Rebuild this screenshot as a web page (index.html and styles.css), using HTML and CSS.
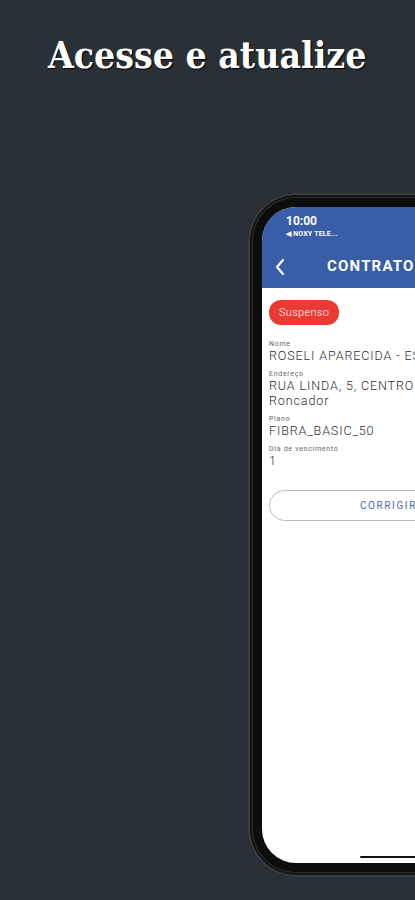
FILE: index.html
```html
<!DOCTYPE html>
<html lang="pt-BR">
<head>
  <meta charset="UTF-8" />
  <meta name="viewport" content="width=device-width, initial-scale=1.0" />
  <title>Acesse e atualize</title>
  <link rel="stylesheet" href="styles.css">
</head>
<body>
  <div class="page">
    <h1 class="headline">Acesse e atualize</h1>
    <div class="phone">
      <div class="screen">
        <div class="status">
          <div class="clock">10:00</div>
          <div class="carrier">&#9664; NOXY TELE...</div>
        </div>
        <div class="appbar">
          <svg class="back" width="12" height="18" viewBox="0 0 12 18">
            <path d="M9 2 L3 9 L9 16" fill="none" stroke="#fff" stroke-width="2.2" stroke-linecap="round" stroke-linejoin="round"/>
          </svg>
          <span class="appbar-title">CONTRATO</span>
        </div>
        <div class="content">
          <span class="badge">Suspenso</span>
          <div class="field">
            <div class="label">Nome</div>
            <div class="value">ROSELI APARECIDA - ESTEVES</div>
          </div>
          <div class="field">
            <div class="label">Endereço</div>
            <div class="value">RUA LINDA, 5, CENTRO -<br>Roncador</div>
          </div>
          <div class="field">
            <div class="label">Plano</div>
            <div class="value">FIBRA_BASIC_50</div>
          </div>
          <div class="field">
            <div class="label">Dia de vencimento</div>
            <div class="value">1</div>
          </div>
          <button class="fix">CORRIGIR DADOS</button>
        </div>
        <div class="home-bar"></div>
      </div>
    </div>
  </div>
</body>
</html>
```

FILE: styles.css
```css
html, body { margin: 0; height: 100%; }
body {
  background: #293137;
  overflow: hidden;
  font-family: Roboto, "Liberation Sans", sans-serif;
}
.page { width: 415px; height: 900px; overflow: hidden; }
.headline {
  margin: 30px 0 0 48px;
  font-family: "DejaVu Serif Condensed", "DejaVu Serif", serif;
  font-stretch: condensed;
  font-size: 37px;
  font-weight: bold;
  line-height: 50px;
  color: #fff;
  white-space: nowrap;
  text-shadow: 1px 1px 1px #000;
}
.phone {
  width: 330px;
  height: 656px;
  margin: 113px 0 0 248px;
  padding: 14px 0 14px 14px;
  background: #0d0d0d;
  border-radius: 48px 0 0 48px;
  box-shadow: inset 0 0 0 2px #3a3d40, inset 0 0 0 4px #151515, inset 0 0 0 5px #2a2c2e;
}
.screen {
  position: relative;
  height: 100%;
  background: #fff;
  border-radius: 34px 0 0 34px;
  overflow: hidden;
  display: flex;
  flex-direction: column;
}
.status {
  background: #3a5da8;
  padding: 7px 0 0 24px;
  height: 36px;
  color: #fff;
}
.clock { font-size: 12px; font-weight: bold; line-height: 14px; }
.carrier { font-size: 7px; font-weight: bold; line-height: 12px; letter-spacing: 0.2px; }
.appbar {
  background: #3a5da8;
  height: 38px;
  display: flex;
  align-items: center;
  padding-left: 12px;
  gap: 41px;
  color: #fff;
}
.back { margin-top: -4px; }
.appbar-title { font-size: 15px; font-weight: bold; margin-top: -6px; letter-spacing: 1.2px; }
.content { padding: 12px 0 0 7px; display: flex; flex-direction: column; align-items: flex-start; }
.badge {
  background: #ea3a33;
  color: #fff;
  font-size: 11px;
  font-weight: 300;
  letter-spacing: 0.3px;
  padding: 6px 10px;
  border-radius: 12px;
  margin-bottom: 15px;
}
.field { margin-bottom: 7px; white-space: nowrap; }
.label { font-size: 7px; color: #666; line-height: 8px; letter-spacing: 0.7px; }
.value { font-size: 12.5px; font-weight: 300; color: #2e2e2e; line-height: 15px; letter-spacing: 0.9px; }
.fix {
  margin-top: 15px;
  width: 320px;
  height: 31px;
  background: #fff;
  border: 1px solid #bcbcbc;
  border-radius: 16px;
  color: #4a67a6;
  font-family: Roboto, "Liberation Sans", sans-serif;
  font-size: 10px;
  letter-spacing: 1.6px;
  text-align: left;
  padding-left: 90px;
}
.home-bar {
  position: absolute;
  left: 98px;
  bottom: 5px;
  width: 120px;
  height: 2px;
  background: #111;
  border-radius: 1px;
}
```
